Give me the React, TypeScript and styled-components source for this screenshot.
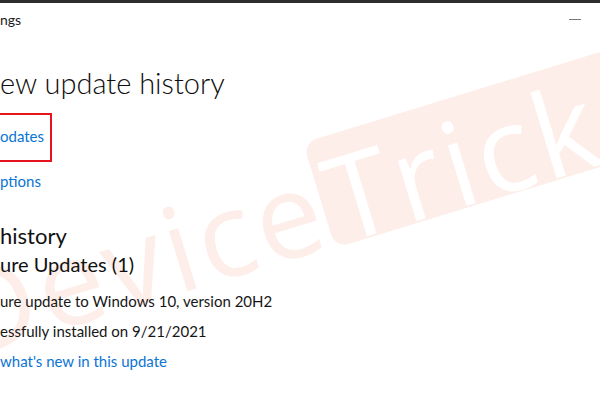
import * as React from "react";
import styled, { createGlobalStyle } from "styled-components";

const GlobalStyle = createGlobalStyle`
  html, body {
    margin: 0;
    padding: 0;
    background: #ffffff;
  }
  body {
    font-family: Lato, "Noto Sans", "Liberation Sans", sans-serif;
    color: #121212;
  }
`;

const Window = styled.div`
  position: relative;
  width: 600px;
  height: 400px;
  overflow: hidden;
  background: #ffffff;
  border-top: 3px solid #2e2e2e;
  box-sizing: border-box;
`;

const TitleBar = styled.div`
  position: relative;
  z-index: 1;
  height: 33px;
  display: flex;
  align-items: center;
  justify-content: space-between;
  padding: 0 19px 0 0;
`;

const TitleText = styled.span`
  font-size: 14px;
  line-height: 17px;
  color: #1a1a1a;
`;

const MinimizeGlyph = styled.span`
  display: block;
  width: 12px;
  height: 1px;
  background: #7a7a7a;
`;

const Content = styled.div`
  position: relative;
  z-index: 1;
  display: flex;
  flex-direction: column;
  align-items: flex-start;
`;

const Heading = styled.h1`
  margin: 29px 0 0;
  font-size: 29px;
  line-height: 35px;
  font-weight: 300;
  color: #0e0e0e;
`;

const Link = styled.a<{ $gap?: number }>`
  display: block;
  margin-top: ${(p) => p.$gap ?? 0}px;
  font-size: 15px;
  line-height: 18px;
  color: #0a74d4;
  text-decoration: none;
`;

const Highlight = styled.div`
  margin: 13px 0 0 -10px;
  padding: 12px 6px 15px 8px;
  border: 2px solid #e5141d;
`;

const SubHeading = styled.h2<{ $size: number; $gap: number }>`
  margin: ${(p) => p.$gap}px 0 0;
  font-size: ${(p) => p.$size}px;
  line-height: ${(p) => Math.round(p.$size * 1.2)}px;
  font-weight: 400;
  color: #111111;
`;

const Line = styled.p<{ $gap: number }>`
  margin: ${(p) => p.$gap}px 0 0;
  font-size: 15px;
  line-height: 18px;
  color: #161616;
`;

/* faint diagonal "DeviceTricks" stamp lying under the page */
const Watermark = styled.div`
  position: absolute;
  z-index: 0;
  left: -67px;
  top: 253px;
  display: flex;
  align-items: flex-start;
  transform-origin: 0 0;
  transform: rotate(-17deg);
  font-family: "Open Sans", Lato, sans-serif;
  font-size: 118px;
  line-height: 110px;
  letter-spacing: 4px;
  white-space: nowrap;
  pointer-events: none;
`;

const MarkPlain = styled.span`
  padding-top: 8px;
  color: #fdeee9;
`;

const MarkBox = styled.span`
  box-sizing: border-box;
  height: 110px;
  padding: 8px 24px 0 6px;
  border-radius: 14px;
  background: #fdeee9;
  color: #ffffff;
`;

export default function App() {
  return (
    <>
      <GlobalStyle />
      <Window>
        <Watermark>
          <MarkPlain>Device</MarkPlain>
          <MarkBox>Tricks</MarkBox>
        </Watermark>
        <TitleBar>
          <TitleText>ngs</TitleText>
          <MinimizeGlyph />
        </TitleBar>
        <Content>
          <Heading>ew update history</Heading>
          <Highlight>
            <Link href="#">odates</Link>
          </Highlight>
          <Link href="#" $gap={10}>
            ptions
          </Link>
          <SubHeading $size={22} $gap={33}>
            history
          </SubHeading>
          <SubHeading $size={20} $gap={3}>
            ure Updates (1)
          </SubHeading>
          <Line $gap={16}>ure update to Windows 10, version 20H2</Line>
          <Line $gap={12}>essfully installed on 9/21/2021</Line>
          <Link href="#" $gap={12}>
            what's new in this update
          </Link>
        </Content>
      </Window>
    </>
  );
}
